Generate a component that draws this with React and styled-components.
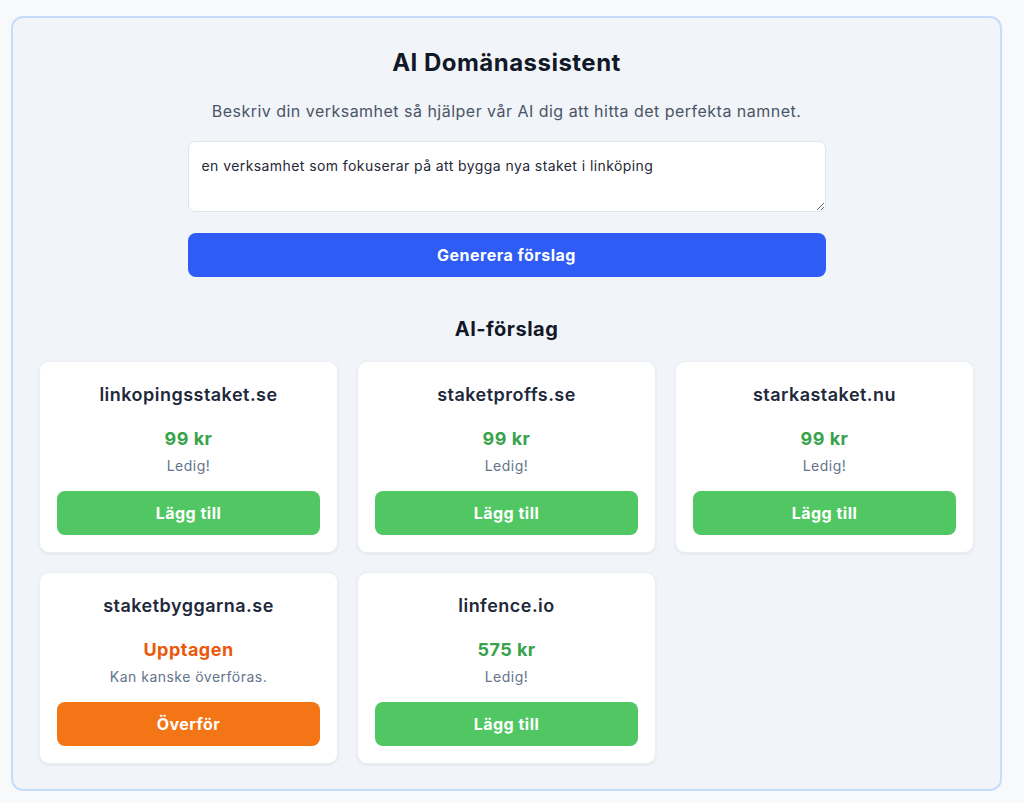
import React from "react";
import styled, { createGlobalStyle } from "styled-components";

const Global = createGlobalStyle`
  html, body { margin: 0; padding: 0; background: #f8f9fb; }
  body { font-family: Inter, "Noto Sans", Roboto, sans-serif; letter-spacing: 0.03em; -webkit-font-smoothing: antialiased; }
  * { box-sizing: border-box; }
`;

const Page = styled.div`
  padding: 16px 22px 8px 11px;
  min-height: 803px;
`;

const Panel = styled.section`
  width: 991px;
  background: #f1f4f9;
  border: 2px solid #c6dcfb;
  border-radius: 12px;
  padding: 29px 26px 25px;
  display: flex;
  flex-direction: column;
  align-items: center;
`;

const Title = styled.h1`
  margin: 0;
  font-size: 24px;
  line-height: 32px;
  font-weight: 700;
  color: #111827;
`;

const Lead = styled.p`
  margin: 20px 0 0;
  font-size: 16px;
  line-height: 24px;
  color: #4b5567;
`;

const Form = styled.div`
  width: 638px;
  margin-top: 18px;
  display: flex;
  flex-direction: column;
  gap: 21px;
`;

const TextArea = styled.textarea`
  width: 100%;
  height: 71px;
  border: 1px solid #dfe3ea;
  border-radius: 7px;
  background: #ffffff;
  padding: 14px 13px;
  font-family: inherit;
  font-size: 14px;
  line-height: 20px;
  letter-spacing: 0.03em;
  color: #1f2937;
  resize: vertical;
  outline: none;
  display: block;
`;

const Button = styled.button`
  width: 100%;
  height: 44px;
  border: none;
  border-radius: 8px;
  background: ${p => p.$bg};
  color: #ffffff;
  font-family: inherit;
  font-size: 16px;
  font-weight: 700;
  letter-spacing: 0.03em;
  cursor: pointer;
`;

const SectionTitle = styled.h2`
  margin: 38px 0 0;
  font-size: 20px;
  line-height: 28px;
  font-weight: 700;
  color: #111827;
`;

const Grid = styled.div`
  width: 100%;
  margin-top: 18px;
  display: grid;
  grid-template-columns: repeat(3, 1fr);
  gap: 19px;
`;

const Card = styled.div`
  background: #ffffff;
  border-radius: 10px;
  border: 1px solid #eceff3;
  box-shadow: 0 1px 3px rgba(15, 23, 42, 0.08);
  padding: 19px 17px 17px;
  display: flex;
  flex-direction: column;
  align-items: center;
`;

const Domain = styled.div`
  font-size: 18px;
  line-height: 28px;
  font-weight: 600;
  color: #1e293b;
`;

const Price = styled.div`
  margin-top: 16px;
  font-size: 18px;
  line-height: 28px;
  font-weight: 700;
  color: ${p => p.$color};
`;

const Note = styled.div`
  margin-top: 3px;
  font-size: 14px;
  line-height: 20px;
  color: #64748b;
`;

const CardAction = styled(Button)`
  margin-top: 15px;
`;

const suggestions = [
  { domain: "linkopingsstaket.se", price: "99 kr", free: true },
  { domain: "staketproffs.se", price: "99 kr", free: true },
  { domain: "starkastaket.nu", price: "99 kr", free: true },
  { domain: "staketbyggarna.se", free: false },
  { domain: "linfence.io", price: "575 kr", free: true },
];

export default function App() {
  return (
    <Page>
      <Global />
      <Panel>
        <Title>AI Domänassistent</Title>
        <Lead>Beskriv din verksamhet så hjälper vår AI dig att hitta det perfekta namnet.</Lead>
        <Form>
          <TextArea defaultValue="en verksamhet som fokuserar på att bygga nya staket i linköping" />
          <Button $bg="#2e5cf5">Generera förslag</Button>
        </Form>
        <SectionTitle>AI-förslag</SectionTitle>
        <Grid>
          {suggestions.map(s => (
            <Card key={s.domain}>
              <Domain>{s.domain}</Domain>
              {s.free ? (
                <>
                  <Price $color="#38a34b">{s.price}</Price>
                  <Note>Ledig!</Note>
                  <CardAction $bg="#50c762">Lägg till</CardAction>
                </>
              ) : (
                <>
                  <Price $color="#ea580c">Upptagen</Price>
                  <Note>Kan kanske överföras.</Note>
                  <CardAction $bg="#f37516">Överför</CardAction>
                </>
              )}
            </Card>
          ))}
        </Grid>
      </Panel>
    </Page>
  );
}
